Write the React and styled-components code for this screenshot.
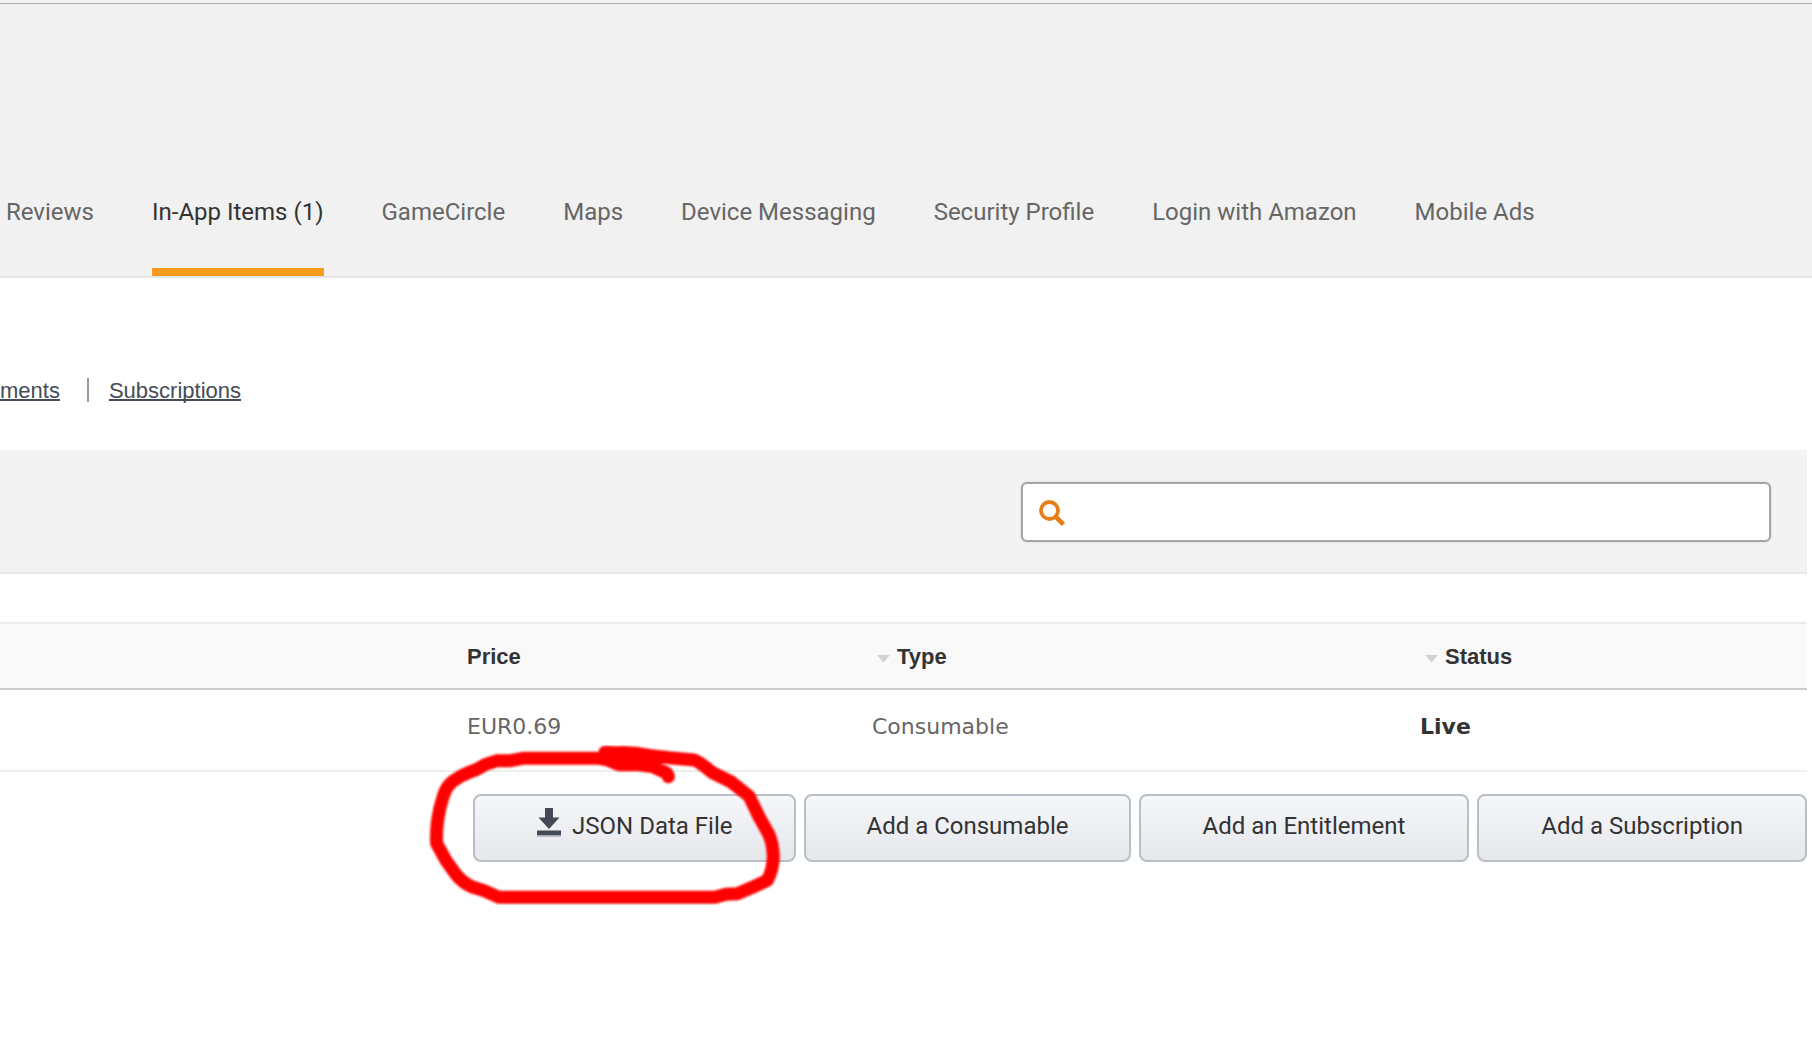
import React from "react";
import styled, { createGlobalStyle, css } from "styled-components";

const GlobalStyle = createGlobalStyle`
  *, *::before, *::after { box-sizing: border-box; }
  body {
    margin: 0;
    background: #fff;
    color: #333;
    font-family: "Liberation Sans", Arial, sans-serif;
  }
`;

const Page = styled.div`
  min-height: 100vh;
`;

const Header = styled.header`
  background: #f1f1f1;
  padding-top: 3px;
  border-bottom: 2px solid #e6e6e6;
`;

const TabBar = styled.nav`
  display: flex;
  gap: 58px;
  padding: 192px 0 0 6px;
  border-top: 1px solid #b0b0b0;
`;

const Tab = styled.a`
  padding-bottom: 40px;
  border-bottom: 8px solid ${(p) => (p.$active ? "#f99b1d" : "transparent")};
  color: ${(p) => (p.$active ? "#333" : "#666")};
  font: 24px/32px Roboto, sans-serif;
  text-decoration: none;
  white-space: nowrap;
`;

const Content = styled.main`
  padding: 100px 5px 64px 0;
`;

const Filters = styled.nav`
  display: flex;
  font-size: 22px;
  line-height: 26px;
`;

const FilterLink = styled.a`
  color: #444c57;
  text-decoration: underline;
  text-decoration-thickness: 2px;
  text-decoration-skip-ink: none;
  text-underline-offset: 1px;
`;

const Divider = styled.span`
  width: 2px;
  height: 24px;
  margin: 0 20px 0 27px;
  background: #999;
`;

const Toolbar = styled.div`
  display: flex;
  justify-content: flex-end;
  margin-top: 46px;
  padding: 32px 36px 30px;
  background: #f3f3f3;
  border-bottom: 2px solid #e8e8e8;
`;

const SearchBox = styled.label`
  display: flex;
  align-items: center;
  gap: 12px;
  width: 750px;
  max-width: 100%;
  height: 60px;
  padding: 2px 16px 0;
  background: #fff;
  border: 2px solid #a5a5a5;
  border-radius: 6px;
  box-shadow: 0 0 2px rgba(0, 0, 0, 0.2);
`;

const SearchInput = styled.input`
  flex: 1;
  min-width: 0;
  border: 0;
  outline: 0;
  background: transparent;
  color: #333;
  font: 22px/24px "Liberation Sans", Arial, sans-serif;
`;

const ItemTable = styled.table`
  width: 100%;
  margin-top: 48px;
  table-layout: fixed;
  border-collapse: separate;
  border-spacing: 0;
`;

const Col = styled.col`
  width: ${(p) => p.$width};
`;

const HeadCell = styled.th`
  padding: 21px 0 19px;
  background: #f9f9f9;
  border-top: 2px solid #ebebeb;
  border-bottom: 2px solid #ccc;
  font-size: 22px;
  line-height: 24px;
  text-align: left;
`;

const SortLabel = styled.span`
  display: flex;
  align-items: center;
  gap: 7px;
  padding-left: 5px;
`;

const SortArrow = styled.span`
  width: 13px;
  margin-top: 3px;
  border: solid transparent;
  border-width: 7px 6px 0;
  border-top-color: #d2d2d2;
`;

const Cell = styled.td`
  padding: 25px 0 31px;
  border-bottom: 2px solid #eee;
  color: #666;
  font: 22px/24px "DejaVu Sans", Verdana, sans-serif;
  ${(p) =>
    p.$strong &&
    css`
      color: #333;
      font-weight: 700;
    `}
`;

const Actions = styled.div`
  display: flex;
  justify-content: flex-end;
  gap: 8px;
  margin-top: 22px;
`;

const ActionButton = styled.button`
  display: flex;
  align-items: center;
  gap: 11px;
  height: 68px;
  padding: 0 ${(p) => (p.$compact ? "60px" : "62px")} 4px;
  border: 2px solid #b9bfc8;
  border-radius: 8px;
  background: linear-gradient(#f6f7f9, #e6e7eb);
  color: #333;
  font: 24px/32px Roboto, sans-serif;
  white-space: nowrap;
`;

const Highlighted = styled.div`
  position: relative;
`;

const Marker = styled.svg`
  position: absolute;
  top: -54px;
  left: -54px;
  overflow: visible;
  pointer-events: none;
`;

const DownloadGlyph = styled.svg`
  flex: none;
  margin-bottom: 8px;
`;

const SearchIcon = () => (
  <svg width="26" height="26" viewBox="0 0 26 26" fill="none" stroke="#e67e17" aria-hidden="true">
    <circle cx="10.5" cy="10.5" r="8.5" strokeWidth="3.8" />
    <path d="M16.5 16.5L24.5 24.5" strokeWidth="4.6" />
  </svg>
);

const DownloadIcon = () => (
  <DownloadGlyph width="24" height="29" viewBox="0 0 24 29" aria-hidden="true">
    <path d="M8 0H16V9.5H22.5L12 21L1.5 9.5H8Z" fill="#434a56" />
    <path d="M0 22.5H24V27.5H0Z" fill="#434a56" />
    <path d="M0 27.5H24V29H0Z" fill="#b9bec6" />
  </DownloadGlyph>
);

const HandDrawnCircle = () => (
  <Marker width="400" height="180" viewBox="0 360 1200 540" aria-hidden="true">
    <defs>
      <filter id="soften" x="-5%" y="-5%" width="110%" height="110%">
        <feGaussianBlur stdDeviation="3" />
      </filter>
    </defs>
    <path
      d="M558 397L590 398Q640 395 690 406L750 413L825 420Q840 424 880 458L935 485L990 528L1020 590L1048 640Q1062 670 1063 710Q1062 750 1045 781L1000 802L955 821L920 823L888 832H240L195 812L160 801Q130 788 110 762L80 720L53 670Q51 640 56 600Q62 560 74 525Q82 500 100 485Q125 466 150 457L172 449L200 433L235 422H275L312 415H530Q560 416 580 426L600 434H655L700 440L732 454Q745 458 748 470"
      fill="none"
      stroke="#f00"
      strokeWidth="39"
      strokeLinecap="round"
      strokeLinejoin="round"
      filter="url(#soften)"
    />
  </Marker>
);

const tabs = [
  "Reviews",
  "In-App Items (1)",
  "GameCircle",
  "Maps",
  "Device Messaging",
  "Security Profile",
  "Login with Amazon",
  "Mobile Ads",
];

const Sortable = ({ children }) => (
  <SortLabel>
    <SortArrow />
    {children}
  </SortLabel>
);

export default function App() {
  return (
    <Page>
      <GlobalStyle />
      <Header>
        <TabBar>
          {tabs.map((name, i) => (
            <Tab key={name} href="#" $active={i === 1}>
              {name}
            </Tab>
          ))}
        </TabBar>
      </Header>
      <Content>
        <Filters>
          <FilterLink href="#">ments</FilterLink>
          <Divider />
          <FilterLink href="#">Subscriptions</FilterLink>
        </Filters>
        <Toolbar>
          <SearchBox>
            <SearchIcon />
            <SearchInput type="text" />
          </SearchBox>
        </Toolbar>
        <ItemTable>
          <colgroup>
            <Col $width="auto" />
            <Col $width="405px" />
            <Col $width="548px" />
            <Col $width="387px" />
          </colgroup>
          <thead>
            <tr>
              <HeadCell />
              <HeadCell scope="col">Price</HeadCell>
              <HeadCell scope="col">
                <Sortable>Type</Sortable>
              </HeadCell>
              <HeadCell scope="col">
                <Sortable>Status</Sortable>
              </HeadCell>
            </tr>
          </thead>
          <tbody>
            <tr>
              <Cell />
              <Cell>EUR0.69</Cell>
              <Cell>Consumable</Cell>
              <Cell $strong>Live</Cell>
            </tr>
          </tbody>
        </ItemTable>
        <Actions>
          <Highlighted>
            <ActionButton type="button">
              <DownloadIcon />
              JSON Data File
            </ActionButton>
            <HandDrawnCircle />
          </Highlighted>
          <ActionButton type="button" $compact>
            Add a Consumable
          </ActionButton>
          <ActionButton type="button">Add an Entitlement</ActionButton>
          <ActionButton type="button">Add a Subscription</ActionButton>
        </Actions>
      </Content>
    </Page>
  );
}
